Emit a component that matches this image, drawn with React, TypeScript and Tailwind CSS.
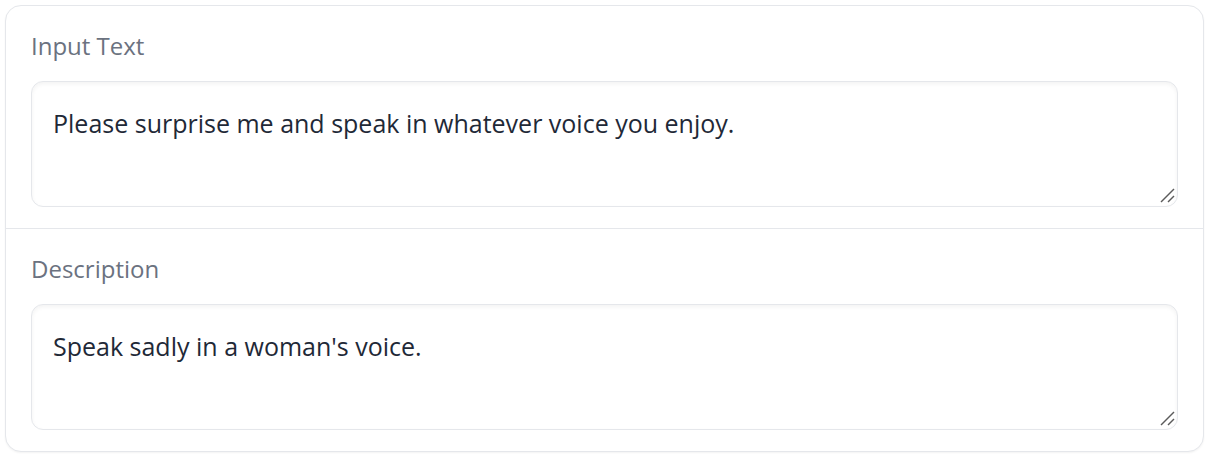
import React from "react";

function Field({ label, value }: { label: string; value: string }) {
  return (
    <div className="flex flex-col px-[25px] pt-[25px] pb-[21px]">
      <label className="text-[24px] leading-[30px] text-[#6b7280] mb-[20px]">{label}</label>
      <div className="relative">
        <textarea
          readOnly
          defaultValue={value}
          className="block h-[126px] w-full rounded-[12px] border border-[#e5e7eb] bg-white px-[21px] pt-[25px] text-[25px] leading-[32px] text-[#1f2937] shadow-[inset_0_2px_4px_0_rgba(0,0,0,0.05)] outline-none resize-none"
        />
        <svg className="absolute right-[3px] bottom-[3px]" width="16" height="16" viewBox="0 0 16 16">
          <line x1="2" y1="14" x2="15" y2="1" stroke="#5b5b5b" strokeWidth="1.4" />
          <line x1="9" y1="14" x2="15" y2="8" stroke="#5b5b5b" strokeWidth="1.4" />
        </svg>
      </div>
    </div>
  );
}

export default function App() {
  return (
    <div className="bg-white w-[1210px] h-[468px] p-[5px]" style={{ fontFamily: '"Open Sans", "Noto Sans", sans-serif' }}>
      <div className="w-[1199px] rounded-[16px] border border-[#e5e7eb] bg-white shadow-[0_1px_2px_rgba(0,0,0,0.05)] flex flex-col">
        <Field label="Input Text" value="Please surprise me and speak in whatever voice you enjoy." />
        <div className="h-px bg-[#e5e7eb]" />
        <Field label="Description" value="Speak sadly in a woman's voice." />
      </div>
    </div>
  );
}
